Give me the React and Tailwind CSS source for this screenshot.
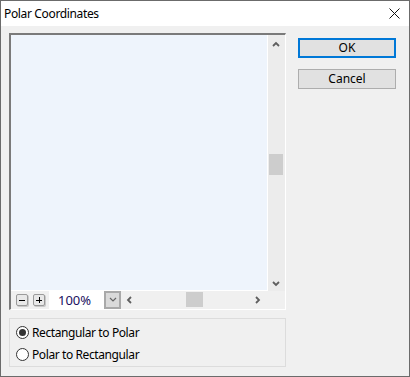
import React from "react";

const Chev = ({ dir }) => {
  const paths = {
    up: "M1 5 L4 2 L7 5",
    down: "M1 2 L4 5 L7 2",
    left: "M5 1 L2 4 L5 7",
    right: "M2 1 L5 4 L2 7",
  };
  return (
    <svg width="8" height="8" viewBox="0 0 8 8">
      <path d={paths[dir]} fill="none" stroke="#5f5f5f" strokeWidth="1.8" />
    </svg>
  );
};

const Radio = ({ checked, label }) => (
  <div className="flex items-center h-[13px]">
    <div className="w-[13px] h-[13px] rounded-full border border-[#333] bg-white flex items-center justify-center">
      {checked && <div className="w-[7px] h-[7px] rounded-full bg-[#333]" />}
    </div>
    <span className="ml-[3px] text-[12px] tracking-[-0.4px] text-black leading-none">{label}</span>
  </div>
);

export default function App() {
  return (
    <div
      className="w-[410px] h-[377px] bg-[#f0f0f0] border border-[#6b6b6b] flex flex-col overflow-hidden"
      style={{ fontFamily: '"Noto Sans", "Noto Sans CJK KR", sans-serif' }}
    >
      <div className="h-[25px] bg-white flex items-center justify-between pl-[3px] pr-[9px] shrink-0">
        <span className="text-[12px] tracking-[-0.35px] text-black">Polar Coordinates</span>
        <svg width="11" height="11" viewBox="0 0 11 11">
          <path d="M0.5 0.5 L10.5 10.5 M10.5 0.5 L0.5 10.5" stroke="#111" strokeWidth="1" />
        </svg>
      </div>
      <div className="flex pt-[7px] pl-[8px]">
        <div className="flex flex-col w-[277px]">
          <div className="w-[277px] h-[277px] border-t-2 border-l-2 border-t-[#7a7a7a] border-l-[#7a7a7a] border-r border-b border-r-white border-b-white flex flex-col">
            <div className="flex h-[256px]">
              <div className="w-[257px] h-[256px] bg-[#eef4fc] border-r border-b border-white" />
              <div className="w-[17px] h-[256px] bg-[#ececec] relative">
                <div className="absolute left-[4px] top-[6px]"><Chev dir="up" /></div>
                <div className="absolute left-[1px] top-[119px] w-[14px] h-[21px] bg-[#cdcdcd]" />
                <div className="absolute left-[4px] bottom-[3px]"><Chev dir="down" /></div>
              </div>
            </div>
            <div className="flex h-[18px]">
              <div className="flex items-center w-[256px] h-[18px] pl-[5px]">
                <div className="w-[12px] h-[12px] rounded-[2px] border border-[#9a9a9a] bg-[#e8e8e8] flex items-center justify-center shadow-[1px_1px_0_#c8c8c8]">
                  <div className="w-[6px] h-[1px] bg-black" />
                </div>
                <div className="ml-[5px] w-[12px] h-[12px] rounded-[2px] border border-[#9a9a9a] bg-[#e8e8e8] flex items-center justify-center relative shadow-[1px_1px_0_#c8c8c8]">
                  <div className="w-[6px] h-[1px] bg-black" />
                  <div className="absolute w-[1px] h-[6px] bg-black" />
                </div>
                <div className="ml-[4px] flex h-[18px]">
                  <div className="w-[55px] h-[18px] bg-white flex items-center pl-[9px] text-[13px] text-[#1a1060] leading-none">100%</div>
                  <div className="w-[17px] h-[18px] bg-[#dadada] border-2 border-[#a9a9a9] flex items-center justify-center">
                    <svg width="8" height="6" viewBox="0 0 8 6">
                      <path d="M1 1 L4 4 L7 1" fill="none" stroke="#666" strokeWidth="1.2" />
                    </svg>
                  </div>
                </div>
                <div className="ml-[1px] flex-1 h-[18px] relative">
                  <div className="absolute left-[4px] top-[5px]"><Chev dir="left" /></div>
                  <div className="absolute left-[64px] top-[1px] w-[17px] h-[15px] bg-[#cdcdcd]" />
                  <div className="absolute right-[5px] top-[5px]"><Chev dir="right" /></div>
                </div>
              </div>
              <div className="flex-1" />
            </div>
          </div>
          <div className="mt-[8px] w-[277px] h-[49px] border border-[#dcdcdc] flex flex-col pl-[6px] pt-[7px] gap-[9px]">
            <Radio checked label="Rectangular to Polar" />
            <Radio label="Polar to Rectangular" />
          </div>
        </div>
        <div className="ml-[12px] pt-[5px] flex flex-col gap-[11px]">
          <div className="w-[98px] h-[20px] bg-[#e1e1e1] border-2 border-[#0078d7] flex items-center justify-center text-[12px] text-black">OK</div>
          <div className="w-[98px] h-[20px] bg-[#e1e1e1] border border-[#adadad] flex items-center justify-center text-[12px] text-black">Cancel</div>
        </div>
      </div>
    </div>
  );
}
